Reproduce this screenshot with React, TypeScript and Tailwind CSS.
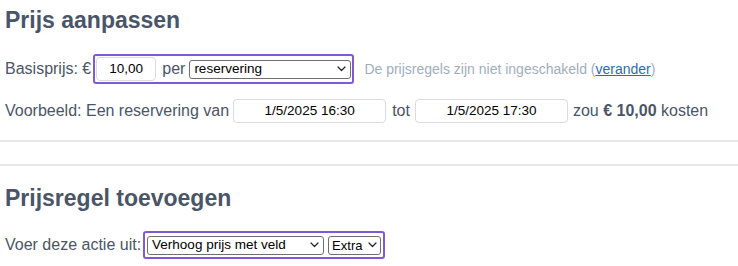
import { ReactNode } from "react";

type SelectProps = {
  value: string;
  className?: string;
};

type DateInputProps = {
  value: string;
};

const Chevron = () => (
  <svg width="9" height="6" viewBox="0 0 9 6" className="shrink-0">
    <polyline points="1,1 4.5,4.5 8,1" fill="none" stroke="#222" strokeWidth="1.2" strokeLinecap="round" strokeLinejoin="round" />
  </svg>
);

const FakeSelect = ({ value, className }: SelectProps) => (
  <div
    className={`h-[19px] flex items-center justify-between pl-[4px] pr-[4px] bg-white border border-[#6f6f6f] rounded-[3px] text-[13.5px] text-black ${className ?? ""}`}
  >
    <span className="leading-none">{value}</span>
    <Chevron />
  </div>
);

const DateInput = ({ value }: DateInputProps) => (
  <div className="w-[153px] h-[24px] flex items-center justify-center bg-white border border-[#dcdcdc] rounded-[4px] text-[13.5px] text-black">
    {value}
  </div>
);

const Highlight = ({ className, children }: { className?: string; children?: ReactNode }) => (
  <div className={`flex items-center border-2 border-[#805ad5] rounded-[3px] ${className ?? ""}`}>
    {children}
  </div>
);

export default function App() {
  return (
    <div
      className="w-[738px] h-[266px] overflow-hidden bg-white text-[#4a5568] text-[16px]"
      style={{ fontFamily: '"Liberation Sans", Arial, sans-serif' }}
    >
      <div className="px-[5px]">
        <h2 className="pt-[4px] h-[36px] leading-[32px] text-[23px] font-bold">Prijs aanpassen</h2>

        <div className="mt-[18px] h-[30px] flex items-center">
          <span>Basisprijs: €</span>
          <Highlight className="ml-[2px] h-[30px] pl-[1px] pr-[1px]">
            <div className="w-[60px] h-[24px] flex items-center justify-center bg-white border border-[#dcdcdc] rounded-[4px] text-[13.5px] text-black">
              10,00
            </div>
            <span className="ml-[6px]">per</span>
            <FakeSelect value="reservering" className="ml-[4px] w-[162px]" />
          </Highlight>
          <span className="ml-[10px] text-[14px] text-[#a0aec0]">
            De prijsregels zijn niet ingeschakeld (
            <a href="#" className="text-[#2b6cb0] underline">
              verander
            </a>
            )
          </span>
        </div>

        <div className="mt-[15px] h-[24px] flex items-center">
          <span>Voorbeeld: Een reservering van</span>
          <div className="ml-[4px]">
            <DateInput value="1/5/2025 16:30" />
          </div>
          <span className="ml-[6px]">tot</span>
          <div className="ml-[5px]">
            <DateInput value="1/5/2025 17:30" />
          </div>
          <span className="ml-[5px]">
            zou <span className="font-bold">€ 10,00</span> kosten
          </span>
        </div>
      </div>

      <div className="mt-[17px] border-b-2 border-[#e8e8e8]" />
      <div className="mt-[22px] border-t-2 border-[#e8e8e8]" />

      <div className="px-[5px]">
        <h2 className="pt-[16px] h-[48px] leading-[32px] text-[23px] font-bold">Prijsregel toevoegen</h2>

        <div className="mt-[17px] h-[28px] flex items-center">
          <span>Voer deze actie uit:</span>
          <Highlight className="ml-[2px] h-[28px] px-[2px]">
            <FakeSelect value="Verhoog prijs met veld" className="w-[177px]" />
            <FakeSelect value="Extra" className="ml-[4px] w-[53px] !pl-[3px] !pr-[3px] !text-[13px]" />
          </Highlight>
        </div>
      </div>
    </div>
  );
}
